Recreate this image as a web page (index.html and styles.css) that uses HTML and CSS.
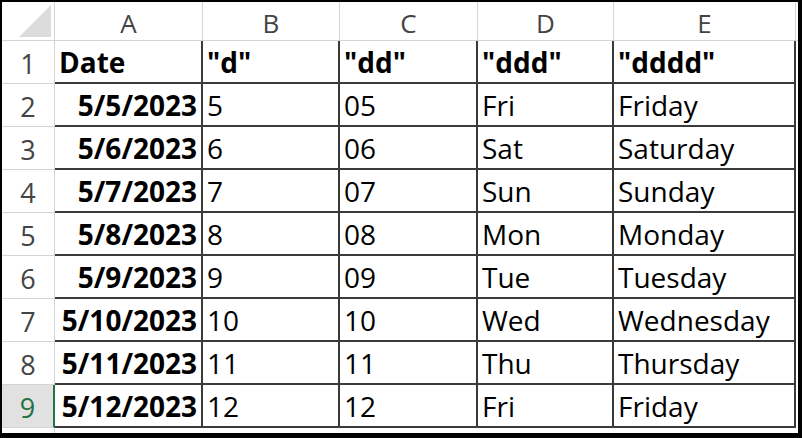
FILE: index.html
```html
<!DOCTYPE html>
<html>
<head>
<meta charset="utf-8">
<link rel="stylesheet" href="styles.css">
</head>
<body>
<div class="frame">
  <div class="sheet">
    <div class="corner"><div class="tri"></div></div>
    <div class="ch">A</div><div class="ch">B</div><div class="ch">C</div><div class="ch">D</div><div class="ch">E</div><div class="ch rest"></div>

    <div class="rh">1</div>
    <div class="c b">Date</div><div class="c b">"d"</div><div class="c b">"dd"</div><div class="c b">"ddd"</div><div class="c b">"dddd"</div><div class="x"></div>

    <div class="rh">2</div>
    <div class="c b r">5/5/2023</div><div class="c">5</div><div class="c">05</div><div class="c">Fri</div><div class="c">Friday</div><div class="x"></div>

    <div class="rh">3</div>
    <div class="c b r">5/6/2023</div><div class="c">6</div><div class="c">06</div><div class="c">Sat</div><div class="c">Saturday</div><div class="x"></div>

    <div class="rh">4</div>
    <div class="c b r">5/7/2023</div><div class="c">7</div><div class="c">07</div><div class="c">Sun</div><div class="c">Sunday</div><div class="x"></div>

    <div class="rh">5</div>
    <div class="c b r">5/8/2023</div><div class="c">8</div><div class="c">08</div><div class="c">Mon</div><div class="c">Monday</div><div class="x"></div>

    <div class="rh">6</div>
    <div class="c b r">5/9/2023</div><div class="c">9</div><div class="c">09</div><div class="c">Tue</div><div class="c">Tuesday</div><div class="x"></div>

    <div class="rh">7</div>
    <div class="c b r">5/10/2023</div><div class="c">10</div><div class="c">10</div><div class="c">Wed</div><div class="c">Wednesday</div><div class="x"></div>

    <div class="rh">8</div>
    <div class="c b r">5/11/2023</div><div class="c">11</div><div class="c">11</div><div class="c">Thu</div><div class="c">Thursday</div><div class="x"></div>

    <div class="rh sel">9</div>
    <div class="c b r">5/12/2023</div><div class="c">12</div><div class="c">12</div><div class="c">Fri</div><div class="c">Friday</div><div class="x"></div>

    <div class="rh last"></div>
    <div class="x"></div><div class="x"></div><div class="x"></div><div class="x"></div><div class="x"></div><div class="x"></div>
  </div>
</div>
</body>
</html>
```

FILE: styles.css
```css
* { box-sizing: border-box; }
html, body { margin: 0; padding: 0; background: #fff; }
.frame {
  width: 802px;
  height: 438px;
  border-style: solid;
  border-color: #000;
  border-width: 2px 4px 5px 2px;
  overflow: hidden;
}
.sheet {
  display: grid;
  grid-template-columns: 53px 148px 137px 138px 136px 182px 1fr;
  grid-template-rows: 39px repeat(9, 43px) 1fr;
  height: 100%;
  font-family: "Open Sans", "Noto Sans", sans-serif;
  font-size: 28px;
  color: #000;
}
.corner {
  border-right: 1px solid #d4d4d4;
  border-bottom: 1px solid #d4d4d4;
  display: flex;
  justify-content: flex-end;
  align-items: flex-end;
  padding: 0 3px 3px 0;
}
.tri {
  width: 32px;
  height: 32px;
  background: #dcdcdc;
  clip-path: polygon(100% 0, 100% 100%, 0 100%);
}
.ch {
  border-right: 1px solid #d4d4d4;
  border-bottom: 1px solid #d4d4d4;
  display: flex;
  align-items: center;
  justify-content: center;
  font-size: 26px;
  color: #444;
  padding-top: 4px;
}
.ch.rest { border-right: none; }
.rh {
  border-right: 1px solid #d4d4d4;
  border-bottom: 1px solid #d4d4d4;
  display: flex;
  align-items: flex-end;
  justify-content: center;
  font-size: 27px;
  color: #444;
  padding-bottom: 6px;
  line-height: 27px;
}
.rh.sel {
  background: #e1e1e1;
  color: #217346;
  border-right: 2px solid #217346;
}
.rh.last { border-bottom: none; }
.c {
  border-right: 2px solid #3a3a3a;
  border-bottom: 2px solid #3a3a3a;
  display: flex;
  align-items: flex-end;
  padding: 0 4px 6px 4px;
  white-space: nowrap;
  line-height: 28px;
}
.c.b { font-weight: 700; }
.c.r { justify-content: flex-end; }
.x { }
```
